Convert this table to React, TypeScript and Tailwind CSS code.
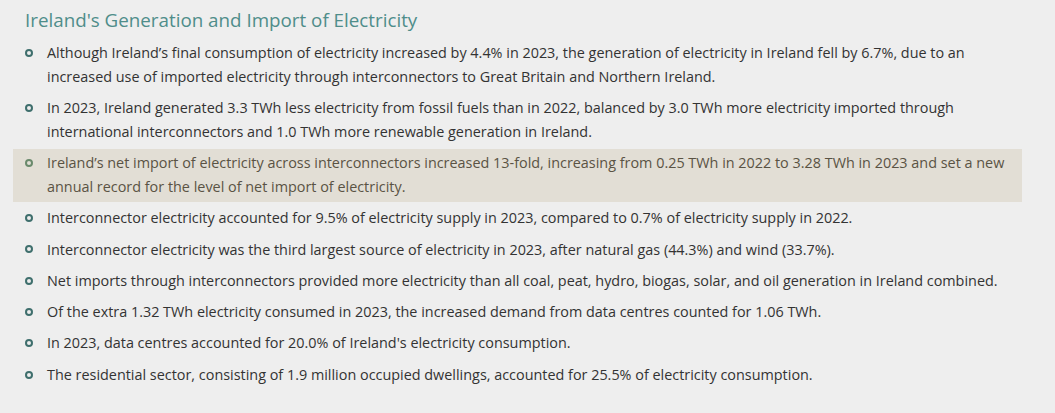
import React from 'react';

const points: { text: string; highlight?: boolean }[] = [
  {
    text: 'Although Ireland’s final consumption of electricity increased by 4.4% in 2023, the generation of electricity in Ireland fell by 6.7%, due to an increased use of imported electricity through interconnectors to Great Britain and Northern Ireland.',
  },
  {
    text: 'In 2023, Ireland generated 3.3 TWh less electricity from fossil fuels than in 2022, balanced by 3.0 TWh more electricity imported through international interconnectors and 1.0 TWh more renewable generation in Ireland.',
  },
  {
    text: 'Ireland’s net import of electricity across interconnectors increased 13-fold, increasing from 0.25 TWh in 2022 to 3.28 TWh in 2023 and set a new annual record for the level of net import of electricity.',
    highlight: true,
  },
  { text: 'Interconnector electricity accounted for 9.5% of electricity supply in 2023, compared to 0.7% of electricity supply in 2022.' },
  { text: 'Interconnector electricity was the third largest source of electricity in 2023, after natural gas (44.3%) and wind (33.7%).' },
  { text: 'Net imports through interconnectors provided more electricity than all coal, peat, hydro, biogas, solar, and oil generation in Ireland combined.' },
  { text: 'Of the extra 1.32 TWh electricity consumed in 2023, the increased demand from data centres counted for 1.06 TWh.' },
  { text: "In 2023, data centres accounted for 20.0% of Ireland's electricity consumption." },
  { text: 'The residential sector, consisting of 1.9 million occupied dwellings, accounted for 25.5% of electricity consumption.' },
];

export default function App() {
  return (
    <div className="min-h-[413px] bg-[#eeeeee] pl-[13px] pt-[7px] font-['Open_Sans',sans-serif]">
      <div className="w-[1009px]">
        <h2 className="pl-3 text-[18.8px] leading-[27px] text-[#4f8d8a]">
          Ireland's Generation and Import of Electricity
        </h2>
        <ul className="mt-[5px] flex flex-col gap-[2.5px]">
          {points.map((p, i) => (
            <li
              key={i}
              className={`flex pt-[2px] pb-[3px] pl-3 pr-2 text-[14.4px] leading-[23.8px] ${
                p.highlight ? 'bg-[#e2ded5] text-[#5a5344]' : 'text-[#333333]'
              }`}
            >
              <span className="flex h-[23.8px] w-[22px] shrink-0 items-center">
                <span
                  className={`block h-[8px] w-[8px] rounded-full border-2 ${
                    p.highlight ? 'border-[#6a8a6c]' : 'border-[#3f6f6d]'
                  }`}
                />
              </span>
              <span>{p.text}</span>
            </li>
          ))}
        </ul>
      </div>
    </div>
  );
}
